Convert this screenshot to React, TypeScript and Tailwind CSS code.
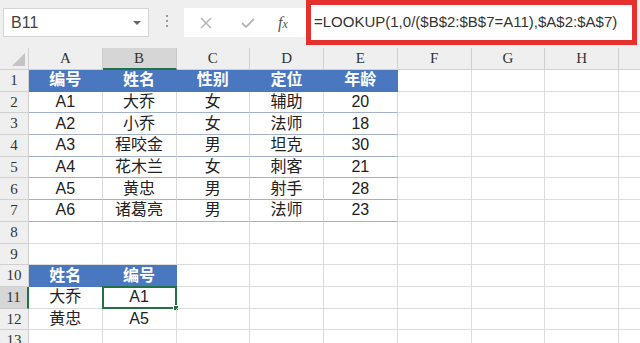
import React from 'react';

const COLS = ['A', 'B', 'C', 'D', 'E', 'F', 'G', 'H', ''];

// row data, A..E
const ROWS: string[][] = [
  ['编号', '姓名', '性别', '定位', '年龄'],
  ['A1', '大乔', '女', '辅助', '20'],
  ['A2', '小乔', '女', '法师', '18'],
  ['A3', '程咬金', '男', '坦克', '30'],
  ['A4', '花木兰', '女', '刺客', '21'],
  ['A5', '黄忠', '男', '射手', '28'],
  ['A6', '诸葛亮', '男', '法师', '23'],
  [],
  [],
  ['姓名', '编号'],
  ['大乔', 'A1'],
  ['黄忠', 'A5'],
  [],
];

const cellFont = { fontFamily: '"Liberation Sans", "Noto Sans CJK SC", sans-serif' };
const headFont = { fontFamily: '"Liberation Serif", "Noto Sans CJK SC", serif' };

function Cell({ r, c }: { r: number; c: number }) {
  const text = ROWS[r - 1]?.[c] ?? '';
  const isBlue = (r === 1 && c <= 4) || (r === 10 && c <= 1);
  const inTable = r >= 2 && r <= 7 && c <= 4;
  const selected = r === 11 && c === 1;

  let cls = 'relative flex items-center justify-center text-[16px] border-r border-b ';
  if (isBlue) cls += 'bg-[#4a78c0] text-white font-bold border-[#4a78c0] ';
  else if (inTable) cls += 'text-[#222] border-r-[#d9d9d9] border-b-[#a3b1c8] ';
  else cls += 'text-[#222] border-[#dcdcdc] ';
  if (inTable && c === 4) cls += 'border-r-[#8d9cb8] ';

  return (
    <div className={cls} style={cellFont}>
      {text}
      {selected && (
        <>
          <div className="absolute -left-px -top-px -right-px -bottom-px border-2 border-[#217346]" />
          <div className="absolute -right-[3px] -bottom-[3px] w-[6px] h-[6px] bg-[#217346] border border-white" />
        </>
      )}
    </div>
  );
}

export default function App() {
  return (
    <div className="w-[640px] h-[343px] overflow-hidden bg-white">
      {/* formula bar */}
      <div className="flex items-start h-12 bg-[#efefef]">
        <div className="ml-[3px] mt-2 w-[146px] h-[29px] bg-white border border-[#d4d4d4] flex items-center justify-between pl-[7px] pr-[7px]">
          <span className="text-[16px] text-[#444]" style={cellFont}>B11</span>
          <span className="w-0 h-0 border-l-[4px] border-r-[4px] border-t-[4px] border-l-transparent border-r-transparent border-t-[#666]" />
        </div>
        <div className="w-[35px] mt-[15px] flex flex-col items-center gap-[3px]">
          <span className="w-[2px] h-[2px] bg-[#999]" />
          <span className="w-[2px] h-[2px] bg-[#999]" />
          <span className="w-[2px] h-[2px] bg-[#999]" />
        </div>
        <div className="mt-2 w-[122px] h-[29px] bg-white flex items-center">
          <svg width="14" height="14" viewBox="0 0 14 14" className="ml-[15px]">
            <path d="M2 2 L12 12 M12 2 L2 12" stroke="#b5b5b5" strokeWidth="1.5" />
          </svg>
          <svg width="16" height="14" viewBox="0 0 16 14" className="ml-[27px]">
            <path d="M2 7 L6 11 L14 3" stroke="#b5b5b5" strokeWidth="1.8" fill="none" />
          </svg>
          <span className="ml-[22px] text-[16px] italic text-[#555]" style={{ fontFamily: '"Liberation Serif", serif' }}>
            f<span className="text-[12px]">x</span>
          </span>
        </div>
        <div className="w-[331px] h-[45px] border-[5px] border-[#e6302e] bg-white flex items-center pl-[3px]">
          <span className="text-[15px] text-[#333] whitespace-nowrap" style={cellFont}>
            =LOOKUP(1,0/($B$2:$B$7=A11),$A$2:$A$7)
          </span>
        </div>
      </div>

      {/* grid */}
      <div className="grid grid-cols-[29px_repeat(9,73.75px)] auto-rows-[21.7px] grid-rows-[22px]">
        <div className="flex items-end justify-end p-[3px] bg-[#efefef] border-r border-b border-[#d0d0d0]">
          <svg width="13" height="13" viewBox="0 0 13 13">
            <path d="M13 0 L13 13 L0 13 Z" fill="#c4c4c4" />
          </svg>
        </div>
        {COLS.map((col, i) => (
          <div
            key={i}
            className={
              col === 'B'
                ? 'flex items-center justify-center bg-[#d6d6d6] border-r border-[#c8c8c8] border-b-2 border-b-[#217346] text-[15px] text-[#333]'
                : 'flex items-center justify-center bg-[#efefef] border-r border-b border-[#d0d0d0] text-[15px] text-[#333]'
            }
            style={headFont}
          >
            {col}
          </div>
        ))}
        {ROWS.map((_, i) => {
          const r = i + 1;
          return (
            <React.Fragment key={r}>
              <div
                className={
                  r === 11
                    ? 'flex items-center justify-center bg-[#d6d6d6] border-b border-[#c8c8c8] border-r-2 border-r-[#217346] text-[15px] text-[#333]'
                    : 'flex items-center justify-center bg-[#efefef] border-r border-b border-[#d0d0d0] text-[15px] text-[#333]'
                }
                style={headFont}
              >
                {r}
              </div>
              {COLS.map((_, c) => (
                <Cell key={c} r={r} c={c} />
              ))}
            </React.Fragment>
          );
        })}
      </div>
    </div>
  );
}
